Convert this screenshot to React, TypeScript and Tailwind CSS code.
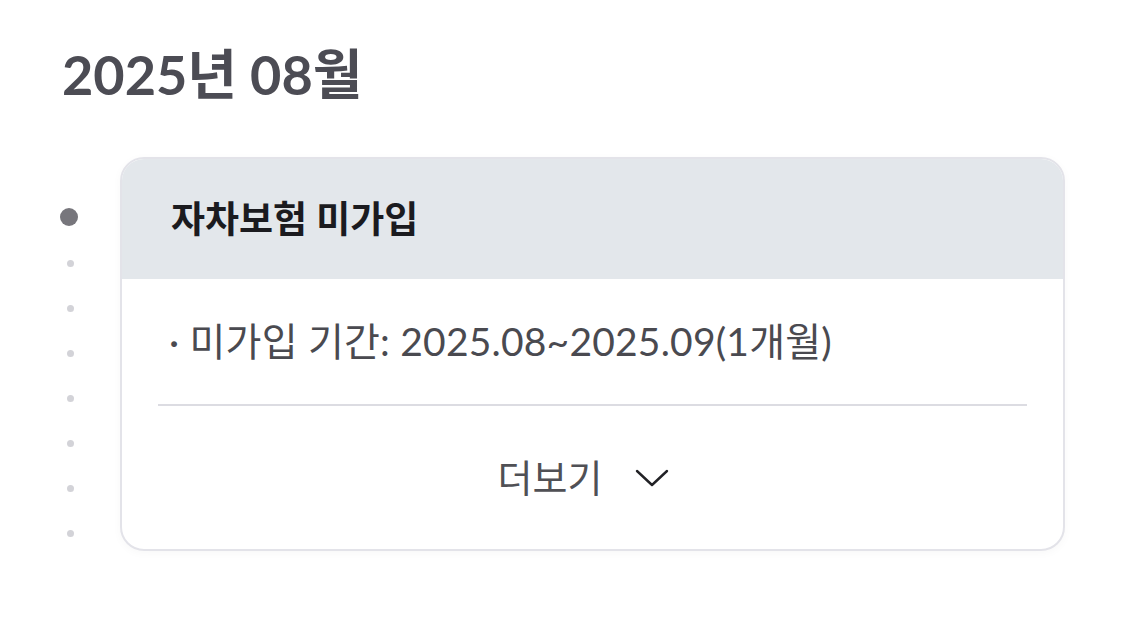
import React from "react";

const FONT = "font-['Lato','Noto_Sans_CJK_KR',sans-serif]";

function Timeline() {
  const small = [0, 1, 2, 3, 4, 5, 6];
  return (
    <div className="flex w-[20px] flex-col items-center">
      <div className="mt-[51px] h-[18px] w-[18px] rounded-full bg-[#77767c]" />
      <div className="mt-[34px] flex flex-col items-center gap-[38px] pl-[2px]">
        {small.map((i) => (
          <div key={i} className="h-[7px] w-[7px] rounded-full bg-[#d3d3d8]" />
        ))}
      </div>
    </div>
  );
}

function Chevron() {
  return (
    <svg width="34" height="20" viewBox="0 0 34 20" fill="none" className="ml-[33px] mr-[18px]">
      <path d="M2 3 L17 17 L32 3" stroke="#222226" strokeWidth="2.4" strokeLinecap="round" strokeLinejoin="round" />
    </svg>
  );
}

function Card() {
  return (
    <div className="w-[945px] overflow-hidden rounded-[24px] border-2 border-[#e3e3e9] bg-white shadow-[0_2px_10px_rgba(0,0,0,0.03)]">
      <div className="flex h-[120px] items-center bg-[#e3e7eb] px-[49px]">
        <span className="text-[37px] font-bold text-[#1b1b1f]">자차보험 미가입</span>
      </div>
      <div className="px-[36px]">
        <div className="flex h-[125px] items-center pl-[11px]">
          <span className="text-[39px] tracking-[0.2px] text-[#4a4a50]">· 미가입 기간: 2025.08~2025.09(1개월)</span>
        </div>
        <div className="h-[2px] bg-[#dcdce2]" />
        <div className="flex h-[143px] items-center justify-center">
          <span className="text-[38px] text-[#505055]">더보기</span>
          <Chevron />
        </div>
      </div>
    </div>
  );
}

export default function App() {
  return (
    <div className={`h-[618px] w-[1125px] overflow-hidden bg-white ${FONT}`}>
      <div className="pl-[62px] pt-[43px]">
        <h1 className="text-[54px] font-bold leading-[64px] text-[#4c4c54]">2025년 08월</h1>
      </div>
      <div className="mt-[50px] flex pl-[59px]">
        <Timeline />
        <div className="ml-[41px]">
          <Card />
        </div>
      </div>
    </div>
  );
}
